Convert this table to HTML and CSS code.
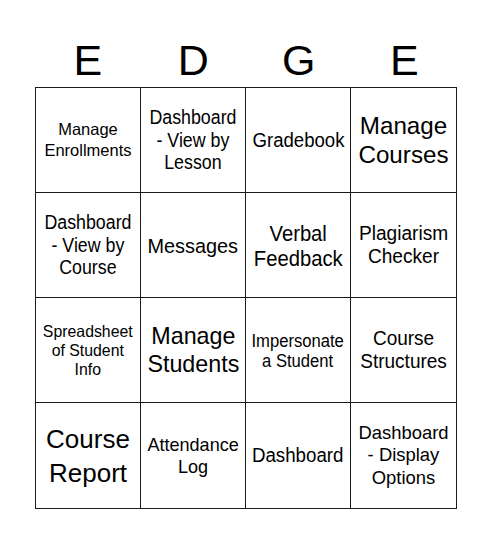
FILE: index.html
```html
<!DOCTYPE html>
<html>
<head>
<meta charset="utf-8">
<link rel="stylesheet" href="styles.css">
</head>
<body>
<div class="card">
  <div class="head">
    <div class="letter">E</div>
    <div class="letter">D</div>
    <div class="letter">G</div>
    <div class="letter">E</div>
  </div>
  <div class="grid">
    <div class="cell"><span class="t c1">Manage<br>Enrollments</span></div>
    <div class="cell"><span class="t c2">Dashboard<br>- View by<br>Lesson</span></div>
    <div class="cell"><span class="t c3">Gradebook</span></div>
    <div class="cell"><span class="t c4">Manage<br>Courses</span></div>

    <div class="cell"><span class="t c2">Dashboard<br>- View by<br>Course</span></div>
    <div class="cell"><span class="t c6">Messages</span></div>
    <div class="cell"><span class="t c7">Verbal<br>Feedback</span></div>
    <div class="cell"><span class="t c8">Plagiarism<br>Checker</span></div>

    <div class="cell"><span class="t c9">Spreadsheet<br>of Student<br>Info</span></div>
    <div class="cell"><span class="t c10">Manage<br>Students</span></div>
    <div class="cell"><span class="t c11">Impersonate<br>a Student</span></div>
    <div class="cell"><span class="t c12">Course<br>Structures</span></div>

    <div class="cell"><span class="t c13">Course<br>Report</span></div>
    <div class="cell"><span class="t c14">Attendance<br>Log</span></div>
    <div class="cell"><span class="t c15">Dashboard</span></div>
    <div class="cell"><span class="t c16">Dashboard<br>- Display<br>Options</span></div>
  </div>
</div>
</body>
</html>
```
FILE: styles.css
```css
html, body {
  margin: 0;
  padding: 0;
  background: #fff;
}
body {
  font-family: "Liberation Sans", Arial, sans-serif;
  color: #000;
}
.card {
  width: 422px;
  margin: 0 auto;
  padding-top: 36px;
}
.head {
  display: grid;
  grid-template-columns: repeat(4, 1fr);
  height: 51px;
}
.letter {
  font-size: 43px;
  line-height: 49px;
  text-align: center;
}
.grid {
  display: grid;
  grid-template-columns: repeat(4, 1fr);
  grid-template-rows: repeat(4, 1fr);
  border: 1.5px solid #1a1a1a;
  box-sizing: border-box;
  width: 422px;
  height: 422px;
}
.cell {
  display: flex;
  align-items: center;
  justify-content: center;
  text-align: center;
  border-right: 1px solid #1a1a1a;
  border-bottom: 1px solid #1a1a1a;
  overflow: hidden;
}
.cell:nth-child(4n) { border-right: none; }
.cell:nth-child(n+13) { border-bottom: none; }
.t {
  display: inline-block;
  white-space: nowrap;
}
.c1 { font-size: 16.5px; line-height: 21px; }
.c2 { font-size: 20px; line-height: 22.5px; transform: scaleX(0.89); }
.c3 { font-size: 20px; line-height: 23px; transform: scaleX(0.93); }
.c4 { font-size: 24.2px; line-height: 29px; }
.c6 { font-size: 20.5px; line-height: 23px; transform: scaleX(0.97); }
.c7 { font-size: 21.5px; line-height: 25px; padding-top: 4px; transform: scaleX(0.94); }
.c8 { font-size: 19.5px; line-height: 23px; transform: scaleX(0.98); }
.c9 { font-size: 16.5px; line-height: 19px; transform: scaleX(0.96); }
.c10 { font-size: 24px; line-height: 28.5px; transform: scaleX(0.97); }
.c11 { font-size: 17.5px; line-height: 20px; padding-top: 2px; transform: scaleX(0.95); }
.c12 { font-size: 20px; line-height: 23.5px; transform: scaleX(0.95); }
.c13 { font-size: 26px; line-height: 34px; }
.c14 { font-size: 19px; line-height: 22px; transform: scaleX(0.95); }
.c15 { font-size: 19.5px; line-height: 23px; transform: scaleX(0.96); }
.c16 { font-size: 19px; line-height: 22.5px; transform: scaleX(0.97); }
```
